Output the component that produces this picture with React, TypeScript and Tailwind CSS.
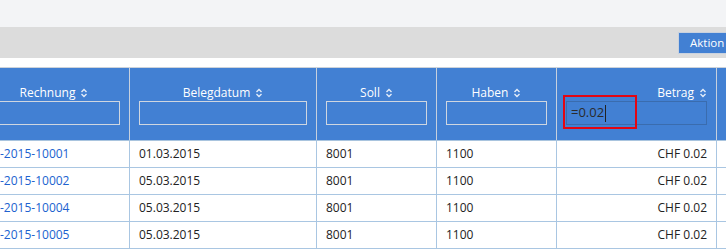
import React from 'react';

type Row = { nr: string; datum: string; soll: string; haben: string; betrag: string };

const rows: Row[] = [
  { nr: '-2015-10001', datum: '01.03.2015', soll: '8001', haben: '1100', betrag: 'CHF 0.02' },
  { nr: '-2015-10002', datum: '05.03.2015', soll: '8001', haben: '1100', betrag: 'CHF 0.02' },
  { nr: '-2015-10004', datum: '05.03.2015', soll: '8001', haben: '1100', betrag: 'CHF 0.02' },
  { nr: '-2015-10005', datum: '05.03.2015', soll: '8001', haben: '1100', betrag: 'CHF 0.02' },
];

const SortIcon = () => (
  <svg width="8" height="10" viewBox="0 0 8 10" className="ml-[5px] shrink-0">
    <path d="M1.5 4 L4 1.5 L6.5 4" fill="none" stroke="#e3ecf9" strokeWidth="1.4" />
    <path d="M1.5 6 L4 8.5 L6.5 6" fill="none" stroke="#e3ecf9" strokeWidth="1.4" />
  </svg>
);

const cols = 'grid grid-cols-[151px_187px_120px_120px_160px_40px]';

const HeaderCell: React.FC<{ title: string; right?: boolean; last?: boolean; children?: React.ReactNode }> = ({ title, right, last, children }) => (
  <div className={`relative h-[72px] flex flex-col justify-end pb-[15px] px-[9px] ${last ? '' : 'border-r border-[#c6d0de]'}`}>
    {title && (
      <div className={`flex items-center h-[17px] text-white text-[12px] ${right ? 'justify-end' : 'justify-center'}`}>
        <span>{title}</span>
        <SortIcon />
      </div>
    )}
    {children ?? (title ? <div className="h-[24px] border border-[#cfd6e0]" /> : <div className="h-[24px]" />)}
  </div>
);

export default function App() {
  return (
    <div className="w-[726px] h-[252px] overflow-hidden bg-white font-['Open_Sans',sans-serif]">
      <div className="h-[27px] bg-[#f3f4f6]" />
      <div className="h-[31px] bg-[#dcdcdc] flex justify-end pt-[5px]">
        <button className="h-[22px] w-[48px] bg-[#4280d3] border border-[#c9d2df] border-r-0 text-white text-[11.5px] text-left pl-[11px] leading-none">
          Aktion
        </button>
      </div>
      <div className="h-[9px]" />
      <div className="overflow-hidden">
        <div className="ml-[-21px] w-[800px]">
          <div className={`${cols} bg-[#4280d3] border-t border-[#cdd3da] border-b border-b-[#a9c4de]`}>
            <HeaderCell title="Rechnung" />
            <HeaderCell title="Belegdatum" />
            <HeaderCell title="Soll" />
            <HeaderCell title="Haben" />
            <HeaderCell title="Betrag" right>
              <div className="h-[24px] border border-[#3a6cae] flex items-center pl-[4px] text-[13px] text-[#2b2b2b]">
                <span>=0.02</span>
                <span className="ml-[1px] w-px h-[17px] bg-[#222]" />
              </div>
              <div className="absolute left-[6px] top-[27px] w-[74px] h-[34px] border-2 border-[#e30613]" />
            </HeaderCell>
            <HeaderCell title="" last />
          </div>
          {rows.map((r) => (
            <div key={r.nr} className={`${cols} h-[27px] border-b border-[#a9c6e2] text-[12px] text-[#222]`}>
              <div className="pl-[21px] pr-[9px] flex items-center border-r border-[#a9c6e2] text-[#2062cf]">{r.nr}</div>
              <div className="px-[9px] flex items-center border-r border-[#a9c6e2]">{r.datum}</div>
              <div className="px-[9px] flex items-center border-r border-[#a9c6e2]">{r.soll}</div>
              <div className="px-[9px] flex items-center border-r border-[#a9c6e2]">{r.haben}</div>
              <div className="px-[9px] flex items-center justify-end border-r border-[#a9c6e2]">{r.betrag}</div>
              <div />
            </div>
          ))}
        </div>
      </div>
    </div>
  );
}
